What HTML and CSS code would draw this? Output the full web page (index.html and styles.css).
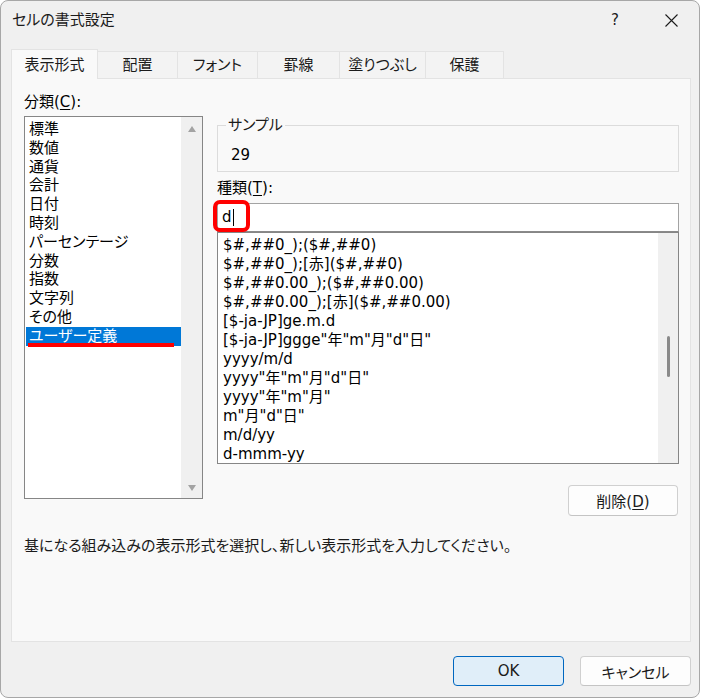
FILE: index.html
```html
<!DOCTYPE html>
<html lang="ja">
<head>
<meta charset="utf-8">
<title>セルの書式設定</title>
<link rel="stylesheet" href="styles.css">
</head>
<body>
<div class="dialog">
  <div class="titlebar">
    <div class="title">セルの書式設定</div>
    <div class="help">?</div>
    <svg class="close" width="13" height="13" viewBox="0 0 13 13"><path d="M0.5 0.5L12.5 12.5M12.5 0.5L0.5 12.5"/></svg>
  </div>
  <div class="tabs">
    <div class="tab active t1">表示形式</div>
    <div class="tab t2">配置</div>
    <div class="tab t3">フォント</div>
    <div class="tab t4">罫線</div>
    <div class="tab t5">塗りつぶし</div>
    <div class="tab t6">保護</div>
  </div>
  <div class="panel">
    <div class="grid">
      <div class="left">
        <div class="label">分類(<u>C</u>):</div>
        <div class="listbox">
          <div class="cats">
            <div class="cat">標準</div>
            <div class="cat">数値</div>
            <div class="cat">通貨</div>
            <div class="cat">会計</div>
            <div class="cat">日付</div>
            <div class="cat">時刻</div>
            <div class="cat">パーセンテージ</div>
            <div class="cat">分数</div>
            <div class="cat">指数</div>
            <div class="cat">文字列</div>
            <div class="cat">その他</div>
            <div class="cat selected">ユーザー定義<span class="underline-mark"></span></div>
          </div>
          <div class="vscroll">
            <span class="arrow up"></span>
            <span class="arrow down"></span>
          </div>
        </div>
      </div>
      <div class="right">
        <fieldset class="sample">
          <legend>サンプル</legend>
          <div class="sample-val">29</div>
        </fieldset>
        <div class="label type-label">種類(<u>T</u>):</div>
        <div class="input"><span>d</span><span class="caret"></span><span class="box-mark"></span></div>
        <div class="fmtlist">
          <div class="fmts">
            <div class="fmt">$#,##0_);($#,##0)</div>
            <div class="fmt">$#,##0_);[赤]($#,##0)</div>
            <div class="fmt">$#,##0.00_);($#,##0.00)</div>
            <div class="fmt">$#,##0.00_);[赤]($#,##0.00)</div>
            <div class="fmt">[$-ja-JP]ge.m.d</div>
            <div class="fmt">[$-ja-JP]ggge"年"m"月"d"日"</div>
            <div class="fmt">yyyy/m/d</div>
            <div class="fmt">yyyy"年"m"月"d"日"</div>
            <div class="fmt">yyyy"年"m"月"</div>
            <div class="fmt">m"月"d"日"</div>
            <div class="fmt">m/d/yy</div>
            <div class="fmt">d-mmm-yy</div>
          </div>
          <div class="fscroll"><span class="thumb"></span></div>
        </div>
        <div class="del-row"><button class="btn del">削除(<u>D</u>)</button></div>
      </div>
    </div>
    <div class="desc">基になる組み込みの表示形式を選択し、新しい表示形式を入力してください。</div>
  </div>
  <div class="footer">
    <button class="btn ok">OK</button>
    <button class="btn cancel">キャンセル</button>
  </div>
</div>
</body>
</html>
```

FILE: styles.css
```css
html, body {
  margin: 0;
  padding: 0;
  background: #ffffff;
}
body {
  font-family: "DejaVu Sans", "Noto Sans CJK JP", sans-serif;
  font-size: 15px;
  color: #000;
  font-feature-settings: "palt" 1, "pwid" 1;
  font-variant-east-asian: proportional-width;
}
.dialog {
  width: 700px;
  height: 698px;
  box-sizing: border-box;
  border: 1px solid #a7a7a7;
  border-radius: 8px;
  background: #f0f0f0;
  display: flex;
  flex-direction: column;
  overflow: hidden;
}
.titlebar {
  height: 48px;
  flex: none;
  display: flex;
  align-items: flex-start;
  padding: 0 21px 0 11px;
}
.title {
  line-height: 20px;
  margin-top: 9px;
  color: #1b1b1b;
  flex: 1;
}
.help {
  line-height: 20px;
  margin-top: 9px;
  color: #1b1b1b;
  margin-right: 46px;
}
.close {
  margin-top: 13px;
  stroke: #1b1b1b;
  stroke-width: 1.1;
  fill: none;
}
.tabs {
  display: flex;
  align-items: flex-end;
  height: 29px;
  padding-left: 10px;
  flex: none;
  position: relative;
  z-index: 1;
}
.tab {
  height: 27px;
  box-sizing: border-box;
  border: 1px solid #e3e3e3;
  border-bottom: none;
  border-left: none;
  background: #f3f3f3;
  text-align: center;
  line-height: 26px;
  color: #1b1b1b;
}
.tab.active {
  height: 30px;
  margin-bottom: -1px;
  border-left: 1px solid #e3e3e3;
  background: #f9f9f9;
  line-height: 30px;
}
.t1 { width: 87px; }
.t2 { width: 80px; }
.t3 { width: 80px; }
.t4 { width: 82px; }
.t5 { width: 86px; }
.t6 { width: 78px; }
.panel {
  margin-left: 10px;
  width: 680px;
  height: 564px;
  box-sizing: border-box;
  border: 1px solid #e3e3e3;
  background: #f9f9f9;
  padding: 13px 0 0 12px;
  flex: none;
}
.grid {
  display: grid;
  grid-template-columns: 179px 462px;
  column-gap: 14px;
  align-items: start;
}
.label {
  line-height: 20px;
  color: #000;
}
.label u, .btn u {
  text-underline-offset: 2px;
}
.listbox {
  margin-top: 4px;
  height: 383px;
  box-sizing: border-box;
  border: 1px solid #868686;
  background: #fff;
  display: flex;
}
.cats {
  flex: 1;
  padding: 3px 0 0 1px;
  overflow: hidden;
}
.cat {
  line-height: 18.8px;
  height: 18.8px;
  padding-left: 3px;
  white-space: nowrap;
  position: relative;
}
.cat.selected {
  background: #0078d7;
  color: #fff;
}
.underline-mark {
  position: absolute;
  left: 2px;
  top: 16px;
  width: 146px;
  height: 4px;
  background: #ff0000;
}
.vscroll {
  width: 21px;
  background: #f0f0f0;
  display: flex;
  flex-direction: column;
  justify-content: space-between;
  align-items: center;
  padding: 9px 0 7px;
  box-sizing: border-box;
}
.arrow {
  width: 0;
  height: 0;
  border-left: 4.5px solid transparent;
  border-right: 4.5px solid transparent;
}
.arrow.up { border-bottom: 6px solid #a3a3a3; }
.arrow.down { border-top: 6px solid #a3a3a3; }
.right {
  padding-top: 24px;
}
.sample {
  margin: 0;
  padding: 0 0 6px 8px;
  border: 1px solid #dcdcdc;
  min-width: 0;
}
.sample legend {
  padding: 0 2px;
  line-height: 18px;
  color: #1b1b1b;
}
.sample-val {
  margin-top: 11px;
  padding-left: 5px;
  line-height: 20px;
}
.type-label {
  margin-top: 6px;
}
.input {
  margin-top: 5px;
  height: 29px;
  box-sizing: border-box;
  border: 1px solid #a3a3a3;
  border-bottom-color: #8a8a8a;
  background: #fff;
  padding-left: 4px;
  line-height: 27px;
  position: relative;
  display: flex;
  align-items: center;
}
.caret {
  display: inline-block;
  width: 1px;
  height: 17px;
  background: #000;
  margin-left: 1px;
}
.box-mark {
  position: absolute;
  left: -5px;
  top: -4px;
  width: 37px;
  height: 32px;
  box-sizing: border-box;
  border: 4px solid #ff0000;
  border-radius: 7px;
}
.fmtlist {
  height: 232px;
  box-sizing: border-box;
  border: 1px solid #868686;
  background: #fff;
  display: flex;
}
.fmts {
  flex: 1;
  padding: 3px 0 0 5px;
  overflow: hidden;
}
.fmt {
  line-height: 19px;
  height: 19px;
  white-space: nowrap;
}
.fscroll {
  width: 20px;
  background: #f0f0f0;
  padding-top: 103px;
  box-sizing: border-box;
  display: flex;
  justify-content: center;
}
.thumb {
  display: block;
  width: 3px;
  height: 41px;
  border-radius: 2px;
  background: #8a8a8a;
}
.del-row {
  margin-top: 21px;
  display: flex;
  justify-content: flex-end;
  padding-right: 1px;
}
.btn {
  font: inherit;
  color: #1b1b1b;
  background: #fdfdfd;
  border: 1px solid #d0d0d0;
  border-bottom-color: #c4c4c4;
  border-radius: 4px;
  padding: 0;
  margin: 0;
}
.del {
  width: 110px;
  height: 31px;
}
.desc {
  margin-top: 20px;
  line-height: 20px;
  color: #1b1b1b;
}
.footer {
  display: flex;
  justify-content: flex-end;
  gap: 16px;
  padding: 14px 8px 0 0;
}
.footer .btn {
  width: 111px;
  height: 30px;
}
.btn.ok {
  background: #e0eef9;
  border: 1px solid #0067c0;
}
```
